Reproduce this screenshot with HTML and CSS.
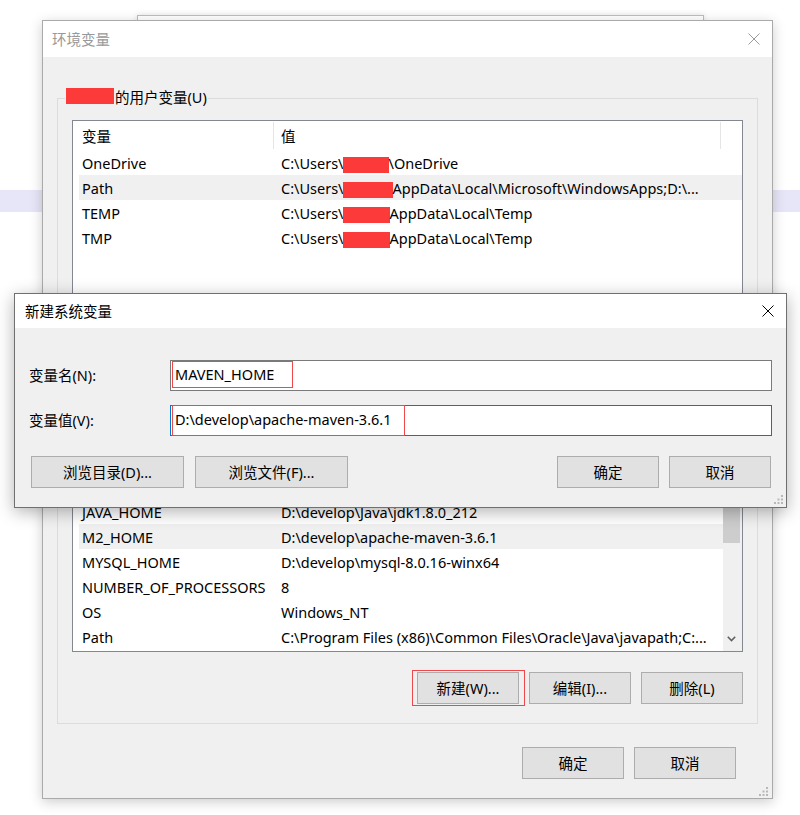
FILE: index.html
```html
<!DOCTYPE html>
<html lang="zh-CN">
<head>
<meta charset="utf-8">
<title>环境变量</title>
<link rel="stylesheet" href="styles.css">
</head>
<body>
<div class="desk">
  <div class="band"></div>
  <div class="win-back"></div>

  <div class="dlg env">
    <div class="titlebar">
      <span class="title">环境变量</span>
      <svg class="close" viewBox="0 0 12 12"><path d="M0.5 0.5 L11.5 11.5 M11.5 0.5 L0.5 11.5" stroke="#9a9a9a" stroke-width="1" fill="none"/></svg>
    </div>
    <div class="env-body">
      <fieldset class="group user">
        <legend><span class="redact-label"></span><span class="legend-text">的用户变量(U)</span></legend>
        <div class="listbox user-list">
          <div class="lv-head">
            <div class="hcell name">变量</div>
            <div class="hcell val">值</div>
          </div>
          <div class="rows">
            <div class="row"><span>OneDrive</span><span>C:\Users\<i class="redact r46"></i>\OneDrive</span></div>
            <div class="row sel"><span>Path</span><span>C:\Users\<i class="redact r50"></i>AppData\Local\Microsoft\WindowsApps;D:\...</span></div>
            <div class="row"><span>TEMP</span><span>C:\Users\<i class="redact r47"></i>AppData\Local\Temp</span></div>
            <div class="row"><span>TMP</span><span>C:\Users\<i class="redact r47"></i>AppData\Local\Temp</span></div>
          </div>
        </div>
        <div class="btnrow">
          <button class="btn">新建(N)...</button>
          <button class="btn">编辑(E)...</button>
          <button class="btn">删除(D)</button>
        </div>
      </fieldset>

      <fieldset class="group sys">
        <legend><span class="legend-text">系统变量(S)</span></legend>
        <div class="listbox sys-list">
          <div class="lv-main">
            <div class="lv-head">
              <div class="hcell name"></div>
              <div class="hcell val"></div>
            </div>
            <div class="rows">
              <div class="row"><span>JAVA_HOME</span><span>D:\develop\Java\jdk1.8.0_212</span></div>
              <div class="row sel"><span>M2_HOME</span><span>D:\develop\apache-maven-3.6.1</span></div>
              <div class="row"><span>MYSQL_HOME</span><span>D:\develop\mysql-8.0.16-winx64</span></div>
              <div class="row"><span>NUMBER_OF_PROCESSORS</span><span>8</span></div>
              <div class="row"><span>OS</span><span>Windows_NT</span></div>
              <div class="row"><span>Path</span><span>C:\Program Files (x86)\Common Files\Oracle\Java\javapath;C:...</span></div>
            </div>
          </div>
          <div class="vscroll">
            <div class="sb-btn"></div>
            <div class="thumb"></div>
            <div class="sb-fill"></div>
            <div class="sb-btn down">
              <svg class="chev" viewBox="0 0 9 6"><path d="M0.8 0.8 L4.5 4.5 L8.2 0.8" stroke="#606060" stroke-width="1.6" fill="none"/></svg>
            </div>
          </div>
        </div>
        <div class="btnrow">
          <button class="btn mark">新建(W)...</button>
          <button class="btn">编辑(I)...</button>
          <button class="btn">删除(L)</button>
        </div>
      </fieldset>

      <div class="footer">
        <button class="btn">确定</button>
        <button class="btn">取消</button>
      </div>
    </div>
    <svg class="grip grip-env" viewBox="0 0 9 9"><g fill="#b8b8b8"><rect x="7" y="0" width="2" height="2"/><rect x="3.5" y="3.5" width="2" height="2"/><rect x="7" y="3.5" width="2" height="2"/><rect x="0" y="7" width="2" height="2"/><rect x="3.5" y="7" width="2" height="2"/><rect x="7" y="7" width="2" height="2"/></g></svg>
  </div>

  <div class="dlg newvar">
    <div class="titlebar">
      <span class="title">新建系统变量</span>
      <svg class="close" viewBox="0 0 12 12"><path d="M0.5 0.5 L11.5 11.5 M11.5 0.5 L0.5 11.5" stroke="#000" stroke-width="1" fill="none"/></svg>
    </div>
    <div class="nv-body">
      <div class="fields">
        <label class="flabel">变量名(N):</label>
        <div class="field"><span class="fval name-val">MAVEN_HOME</span></div>
        <label class="flabel">变量值(V):</label>
        <div class="field focus"><span class="fval path-val">D:\develop\apache-maven-3.6.1</span></div>
      </div>
      <div class="nv-buttons">
        <button class="btn wide">浏览目录(D)...</button>
        <button class="btn wide second">浏览文件(F)...</button>
        <button class="btn narrow ok">确定</button>
        <button class="btn narrow cancel">取消</button>
      </div>
    </div>
    <svg class="grip grip-nv" viewBox="0 0 9 9"><g fill="#b8b8b8"><rect x="7" y="0" width="2" height="2"/><rect x="3.5" y="3.5" width="2" height="2"/><rect x="7" y="3.5" width="2" height="2"/><rect x="0" y="7" width="2" height="2"/><rect x="3.5" y="7" width="2" height="2"/><rect x="7" y="7" width="2" height="2"/></g></svg>
  </div>
</div>
</body>
</html>
```

FILE: styles.css
```css
* { box-sizing: border-box; }

body {
  margin: 0;
  font-family: "Noto Sans", "Noto Sans CJK SC", sans-serif;
  font-size: 14.5px;
  color: #000;
  background: #fff;
}

.desk {
  position: relative;
  width: 800px;
  height: 815px;
  overflow: hidden;
  background: #fff;
}

.band {
  margin-top: 190px;
  height: 22px;
  background: #e6e6f8;
}

.win-back {
  position: absolute;
  left: 137px;
  top: 15px;
  width: 567px;
  height: 400px;
  background: #fff;
  border: 1px solid #bdbdbd;
  box-shadow: 0 0 6px rgba(0, 0, 0, 0.12);
}

.dlg {
  position: absolute;
  display: flex;
  flex-direction: column;
  background: #f0f0f0;
}

.env {
  left: 42px;
  top: 20px;
  width: 731px;
  height: 779px;
  border: 1px solid #aaaaaa;
  box-shadow: 0 3px 12px rgba(0, 0, 0, 0.2);
}

.titlebar {
  flex: none;
  display: flex;
  align-items: center;
  justify-content: space-between;
  background: #fff;
  line-height: 20px;
}

.env .titlebar {
  height: 36px;
  padding: 0 12px 1px 9px;
}

.env .title { color: #999; }

.close {
  width: 12px;
  height: 12px;
  flex: none;
}

.env-body {
  flex: 1;
  display: flex;
  flex-direction: column;
  padding: 31px 14px 0;
}

.group {
  margin: 0;
  min-width: 0;
  border: 1px solid #dcdcdc;
  padding: 12px 14px 19px;
}

.group legend {
  margin-left: -7px;
  padding: 0 1px;
  height: 20px;
  line-height: 20px;
  white-space: nowrap;
}

.redact-label {
  display: inline-block;
  vertical-align: top;
  width: 48px;
  height: 16px;
  background: #fc3a3a;
}

.legend-text {
  display: inline-block;
  vertical-align: top;
  padding-left: 1px;
  margin-top: -1px;
}

.sys { margin-top: 11px; }

.listbox {
  border: 1px solid #828790;
  background: #fff;
  overflow: hidden;
}

.user-list { height: 234px; }

.sys-list {
  height: 183px;
  display: flex;
}

.lv-main {
  flex: 1;
  min-width: 0;
}

.lv-head {
  display: flex;
  height: 29px;
}

.hcell {
  height: 27px;
  margin-top: 1px;
  display: flex;
  align-items: center;
  border-right: 1px solid #e5e5e5;
  white-space: nowrap;
}

.hcell.name { width: 201px; padding-left: 9px; }
.hcell.val { width: 447px; padding-left: 7px; }

.rows { padding-left: 6px; }

.row {
  display: grid;
  grid-template-columns: 199px 442px;
  height: 25px;
  align-items: center;
  white-space: nowrap;
  line-height: 20px;
}

.row > span {
  padding-left: 3px;
  overflow: hidden;
}

.row.sel { background: #f0f0f0; }

.redact {
  display: inline-block;
  height: 16px;
  vertical-align: -4px;
  margin-left: -1px;
  background: #fc3a3a;
}

.r46 { width: 46px; }
.r47 { width: 47px; }
.r50 { width: 50px; }

.vscroll {
  flex: none;
  width: 19px;
  padding-right: 2px;
  background: #f0f0f0;
  display: flex;
  flex-direction: column;
}

.sb-btn {
  flex: none;
  height: 17px;
}

.sb-btn.down {
  margin-bottom: 4px;
  display: flex;
  align-items: center;
  justify-content: center;
}

.chev { width: 9px; height: 6px; }

.thumb {
  flex: none;
  height: 56px;
  background: #cdcdcd;
}

.sb-fill { flex: 1; }

.btn {
  height: 32px;
  margin: 0;
  padding: 0;
  border: 1px solid #adadad;
  background: #e1e1e1;
  font: inherit;
  line-height: 20px;
  color: #000;
  display: flex;
  align-items: center;
  justify-content: center;
  white-space: nowrap;
}

.btnrow {
  display: flex;
  justify-content: flex-end;
  gap: 10px;
  margin-top: 20px;
}

.btnrow .btn { width: 102px; }

.mark { position: relative; }

.mark::after {
  content: "";
  position: absolute;
  left: -6px;
  right: -7px;
  top: -3px;
  bottom: -3px;
  border: 1px solid #f04848;
}

.footer {
  display: flex;
  justify-content: flex-end;
  gap: 10px;
  margin: 23px 22px 0 0;
}

.footer .btn { width: 102px; }

.grip {
  position: absolute;
  width: 9px;
  height: 9px;
}

.grip-env { right: 4px; bottom: 2px; }
.grip-nv { right: 3px; bottom: 3px; }

/* new variable dialog */
.newvar {
  left: 14px;
  top: 293px;
  width: 773px;
  height: 215px;
  border: 1px solid #707070;
  box-shadow: 0 4px 16px rgba(0, 0, 0, 0.3);
}

.newvar .titlebar {
  height: 34px;
  padding: 0 12px 1px 10px;
}

.nv-body {
  flex: 1;
  padding: 32px 14px 19px;
}

.fields {
  display: grid;
  grid-template-columns: 141px 1fr;
  row-gap: 14px;
  align-items: center;
}

.flabel {
  line-height: 20px;
  white-space: nowrap;
  margin-top: -1px;
}

.field {
  height: 31px;
  border: 1px solid #7a7a7a;
  background: #fff;
  padding-left: 1px;
  display: flex;
  align-items: flex-start;
}

.field.focus { border-color: #0078d7; }

.fval {
  height: 27px;
  line-height: 24px;
  padding: 0 2px;
  border: 1px solid #f04848;
  white-space: nowrap;
}

.name-val { width: 121px; }
.path-val { width: 233px; }

.field.focus .fval {
  height: 31px;
  margin-top: -1px;
  line-height: 26px;
}

.nv-buttons {
  display: flex;
  margin: 20px 1px 0 2px;
}

.btn.wide { width: 153px; }
.btn.second { margin-left: 11px; }
.btn.narrow { width: 102px; }
.btn.ok { margin-left: auto; }
.btn.cancel { margin-left: 10px; }
```
